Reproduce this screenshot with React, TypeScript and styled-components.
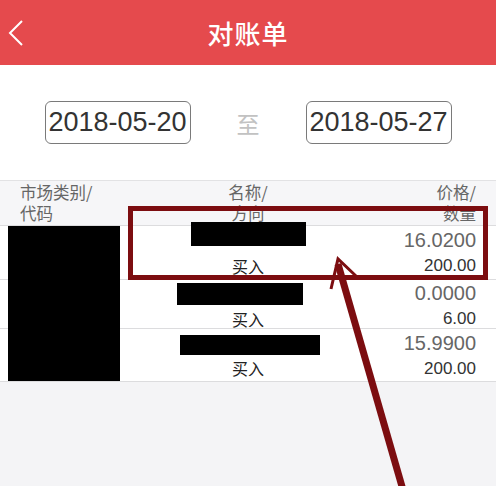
import React from 'react'
import styled, { createGlobalStyle } from 'styled-components'

const GlobalStyle = createGlobalStyle`
  html, body {
    margin: 0;
    padding: 0;
    background: #f4f4f6;
  }
  body {
    font-family: 'Liberation Sans', 'Noto Sans CJK SC', sans-serif;
  }
`

const Page = styled.div`
  position: relative;
  width: 496px;
  height: 486px;
  overflow: hidden;
  background: #f4f4f6;
`

const NavBar = styled.header`
  position: relative;
  height: 65px;
  background: #e54a4d;
  display: flex;
  align-items: center;
  justify-content: center;
`

const BackButton = styled.button`
  position: absolute;
  left: 1px;
  top: 14px;
  width: 30px;
  height: 38px;
  padding: 0;
  border: 0;
  background: none;
  display: flex;
  align-items: center;
  justify-content: center;
`

const Title = styled.h1`
  margin: 0;
  color: #fff;
  font-family: 'Noto Sans CJK SC', sans-serif;
  font-size: 26px;
  font-weight: 500;
  letter-spacing: 1px;
`

const DateBar = styled.div`
  height: 115px;
  background: #fff;
  display: flex;
  align-items: center;
  justify-content: center;
  gap: 46px;
  border-bottom: 1px solid #e2e2e4;
`

const DateBox = styled.div`
  width: 146px;
  height: 43px;
  box-sizing: border-box;
  border: 1px solid #7a7a7a;
  border-radius: 6px;
  display: flex;
  align-items: center;
  justify-content: center;
  font-size: 27px;
  color: #333;
`

const To = styled.span`
  font-family: 'Noto Sans CJK SC', sans-serif;
  font-size: 23px;
  color: #c2c2c2;
`

const Table = styled.div`
  position: relative;
`

const Grid = styled.div<{ $head?: boolean; $h: number }>`
  display: grid;
  grid-template-columns: 1fr 1fr 1fr;
  height: ${({ $h }) => $h}px;
  box-sizing: border-box;
  padding: 0 20px;
  background: ${({ $head }) => ($head ? '#f6f6f8' : '#fff')};
  border-bottom: 1px solid #dcdcde;
  font-family: 'Noto Sans CJK SC', sans-serif;
  &:last-child {
    border-bottom: 0;
  }
`

const Cell = styled.div<{ $align: 'left' | 'center' | 'right' }>`
  display: flex;
  flex-direction: column;
  justify-content: center;
  align-items: ${({ $align }) =>
    $align === 'left' ? 'flex-start' : $align === 'right' ? 'flex-end' : 'center'};
`

const HeadText = styled.span`
  font-size: 16.5px;
  line-height: 21px;
  color: #666;
`

const Price = styled.span`
  font-family: 'Liberation Sans', sans-serif;
  font-size: 20px;
  line-height: 27px;
  color: #666;
`

const Qty = styled.span`
  font-family: 'Liberation Sans', sans-serif;
  font-size: 17px;
  line-height: 24px;
  color: #333;
`

const Side = styled.span`
  font-size: 16px;
  line-height: 24px;
  color: #222;
  margin-top: 26px;
`

const Redact = styled.div`
  position: absolute;
  background: #000;
`

const Overlay = styled.svg`
  position: absolute;
  left: 0;
  top: 0;
  pointer-events: none;
`

const rows = [
  { price: '16.0200', qty: '200.00', h: 54 },
  { price: '0.0000', qty: '6.00', h: 49 },
  { price: '15.9900', qty: '200.00', h: 53 },
]

const redactions = [
  { left: 8, top: 45, width: 112, height: 155 },
  { left: 191, top: 41, width: 115, height: 24 },
  { left: 177, top: 102, width: 126, height: 22 },
  { left: 180, top: 154, width: 140, height: 20 },
]

export default function App() {
  return (
    <Page>
      <GlobalStyle />
      <NavBar>
        <BackButton aria-label="back">
          <svg width="16" height="28" viewBox="0 0 16 28">
            <polyline points="14,2 2,14 14,26" fill="none" stroke="#fff" strokeWidth="2" />
          </svg>
        </BackButton>
        <Title>对账单</Title>
      </NavBar>
      <DateBar>
        <DateBox>2018-05-20</DateBox>
        <To>至</To>
        <DateBox>2018-05-27</DateBox>
      </DateBar>
      <Table>
        <Grid $head $h={45}>
          <Cell $align="left">
            <HeadText>市场类别/</HeadText>
            <HeadText>代码</HeadText>
          </Cell>
          <Cell $align="center">
            <HeadText>名称/</HeadText>
            <HeadText>方向</HeadText>
          </Cell>
          <Cell $align="right">
            <HeadText>价格/</HeadText>
            <HeadText>数量</HeadText>
          </Cell>
        </Grid>
        {rows.map((r, i) => (
          <Grid key={i} $h={r.h}>
            <Cell $align="left" />
            <Cell $align="center">
              <Side>买入</Side>
            </Cell>
            <Cell $align="right">
              <Price>{r.price}</Price>
              <Qty>{r.qty}</Qty>
            </Cell>
          </Grid>
        ))}
        {redactions.map((b, i) => (
          <Redact key={i} style={b} />
        ))}
      </Table>
      <Overlay width="496" height="486" viewBox="0 0 496 486">
        <rect x="130.5" y="208.5" width="355" height="69" fill="none" stroke="#7c0d10" strokeWidth="5" />
        <line x1="338" y1="264" x2="403" y2="490" stroke="#7c0d10" strokeWidth="7" />
        <polyline points="331,289 338,259 356,276" fill="none" stroke="#7c0d10" strokeWidth="3" />
      </Overlay>
    </Page>
  )
}
